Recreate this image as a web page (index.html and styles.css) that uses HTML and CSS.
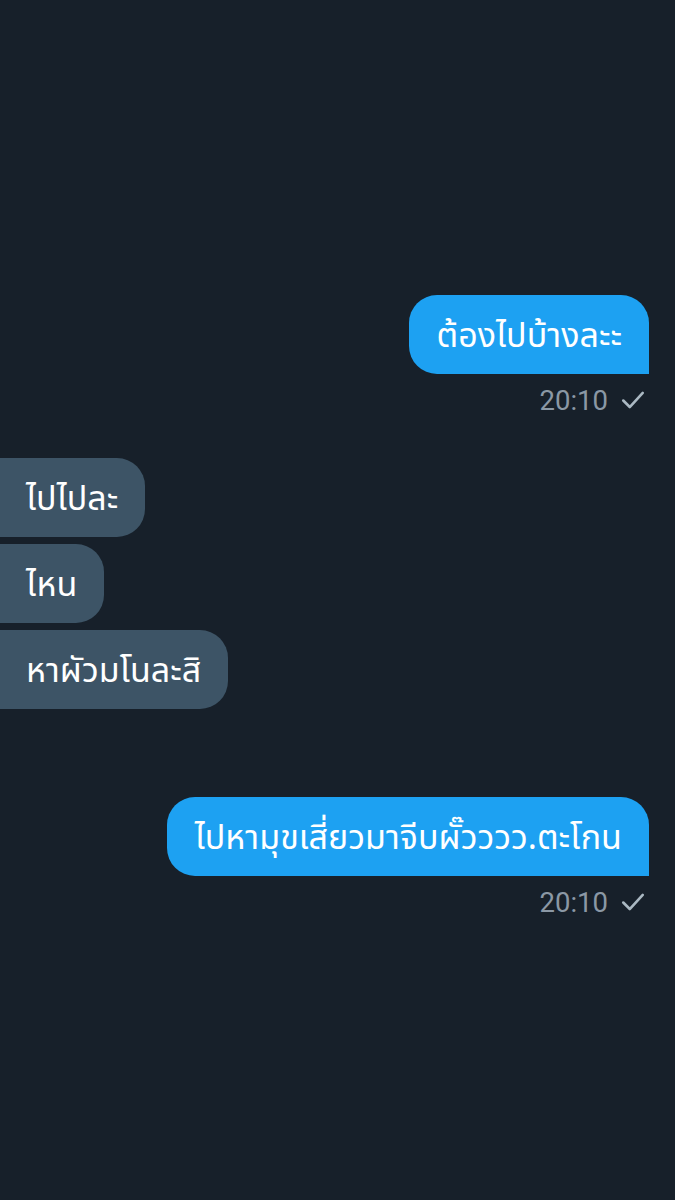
FILE: index.html
```html
<!DOCTYPE html>
<html lang="th">
<head>
<meta charset="utf-8">
<link rel="stylesheet" href="styles.css">
</head>
<body>
<div class="chat">
  <div class="out-group first">
    <div class="bubble out">ต้องไปบ้างละะ</div>
    <div class="meta"><span class="time">20:10</span>
      <svg class="check" viewBox="0 0 24 24"><path d="M3 12.5l6 6L21 5.5" fill="none" stroke="currentColor" stroke-width="2.4" stroke-linecap="round" stroke-linejoin="round"/></svg>
    </div>
  </div>
  <div class="in-group">
    <div class="bubble in">ไปไปละ</div>
    <div class="bubble in">ไหน</div>
    <div class="bubble in">หาผัวมโนละสิ</div>
  </div>
  <div class="out-group second">
    <div class="bubble out">ไปหามุขเสี่ยวมาจีบผั๊วววว.ตะโกน</div>
    <div class="meta"><span class="time">20:10</span>
      <svg class="check" viewBox="0 0 24 24"><path d="M3 12.5l6 6L21 5.5" fill="none" stroke="currentColor" stroke-width="2.4" stroke-linecap="round" stroke-linejoin="round"/></svg>
    </div>
  </div>
</div>
</body>
</html>
```
FILE: styles.css
```css
html, body {
  margin: 0;
  padding: 0;
  background: #17202a;
  height: 1200px;
  overflow: hidden;
}
body {
  font-family: "Noto Sans", "Noto Sans Thai", "Liberation Sans", sans-serif;
  color: #ffffff;
}
.chat {
  display: flex;
  flex-direction: column;
  padding-top: 295px;
}
.out-group {
  display: flex;
  flex-direction: column;
  align-items: flex-end;
  padding-right: 26px;
}
.second {
  margin-top: 88px;
}
.bubble {
  font-size: 34px;
  line-height: 43px;
  letter-spacing: 0.05px;
  padding: 18px 27px 18px 28px;
  white-space: nowrap;
}
.out {
  background: #1da1f2;
  border-radius: 28px 28px 0 28px;
}
.in-group {
  display: flex;
  flex-direction: column;
  align-items: flex-start;
  gap: 7px;
  margin-top: 41px;
}
.in {
  background: #3d5466;
  border-radius: 0 28px 28px 0;
  padding-left: 26px;
}
.meta {
  display: flex;
  align-items: center;
  gap: 12px;
  margin-top: 9px;
  height: 34px;
  color: #8b98a5;
  padding-right: 3px;
}
.time {
  font-family: Roboto, "Noto Sans", sans-serif;
  font-size: 27.5px;
}
.check {
  width: 26px;
  height: 26px;
  color: #aab8c2;
}
```
